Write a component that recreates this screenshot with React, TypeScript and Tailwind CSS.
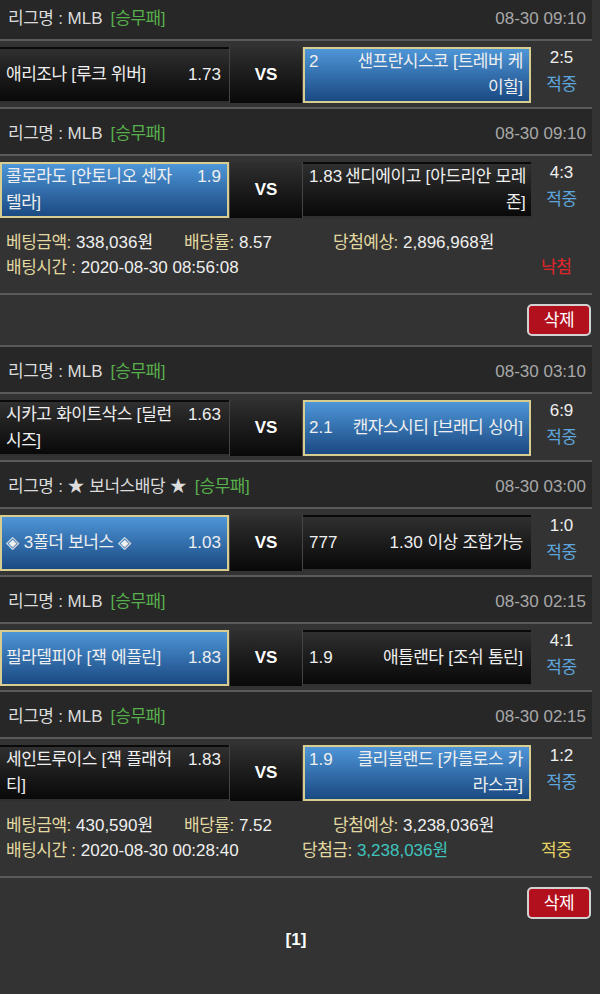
import React from 'react'

type Side = { lines: string[]; odds: string; picked?: boolean }
type Match = { league: string; time: string; home: Side; away: Side; score: string }
type Bet = {
  matches: Match[]
  amount: string
  rate: string
  expect: string
  time: string
  win?: string
  result: 'win' | 'lose'
}

const HANGUL = /([\uAC00-\uD7A3]+)/

// 한글만 폭 보정 (원본 폰트 폭에 맞춤)
const Ko = ({ text }: { text: string }) => (
  <>
    {text.split(HANGUL).map((part, i) =>
      i % 2 === 1 ? (
        <span key={i} className="text-[17px] tracking-[-0.5px]">
          {part}
        </span>
      ) : (
        <React.Fragment key={i}>{part}</React.Fragment>
      )
    )}
  </>
)

const bets: Bet[] = [
  {
    matches: [
      {
        league: 'MLB',
        time: '08-30 09:10',
        home: { lines: ['애리조나 [루크 위버]'], odds: '1.73' },
        away: { lines: ['샌프란시스코 [트레버 케', '이힐]'], odds: '2', picked: true },
        score: '2:5'
      },
      {
        league: 'MLB',
        time: '08-30 09:10',
        home: { lines: ['콜로라도 [안토니오 센자', '텔라]'], odds: '1.9', picked: true },
        away: { lines: ['샌디에이고 [아드리안 모레', '존]'], odds: '1.83' },
        score: '4:3'
      }
    ],
    amount: '338,036원',
    rate: '8.57',
    expect: '2,896,968원',
    time: '2020-08-30 08:56:08',
    result: 'lose'
  },
  {
    matches: [
      {
        league: 'MLB',
        time: '08-30 03:10',
        home: { lines: ['시카고 화이트삭스 [딜런', '시즈]'], odds: '1.63' },
        away: { lines: ['캔자스시티 [브래디 싱어]'], odds: '2.1', picked: true },
        score: '6:9'
      },
      {
        league: '★ 보너스배당 ★',
        time: '08-30 03:00',
        home: { lines: ['◈ 3폴더 보너스 ◈'], odds: '1.03', picked: true },
        away: { lines: ['1.30 이상 조합가능'], odds: '777' },
        score: '1:0'
      },
      {
        league: 'MLB',
        time: '08-30 02:15',
        home: { lines: ['필라델피아 [잭 에플린]'], odds: '1.83', picked: true },
        away: { lines: ['애틀랜타 [조쉬 톰린]'], odds: '1.9' },
        score: '4:1'
      },
      {
        league: 'MLB',
        time: '08-30 02:15',
        home: { lines: ['세인트루이스 [잭 플래허', '티]'], odds: '1.83' },
        away: { lines: ['클리블랜드 [카를로스 카', '라스코]'], odds: '1.9', picked: true },
        score: '1:2'
      }
    ],
    amount: '430,590원',
    rate: '7.52',
    expect: '3,238,036원',
    time: '2020-08-30 00:28:40',
    win: '3,238,036원',
    result: 'win'
  }
]

const cellClass = (picked?: boolean) =>
  picked
    ? 'border-[#d8cd90] bg-gradient-to-b from-[#4e96d8] to-[#1b4a83]'
    : 'border-transparent bg-gradient-to-b from-[#303030] to-[#090909]'

const LeagueHeader = ({ league, time }: { league: string; time: string }) => (
  <div className="h-[49px] border-y-2 border-[#5a5a5a] bg-[#272727] flex items-center justify-between pt-[4px] pl-[8px] pr-[6px]">
    <div className="text-[#dcdcdc] whitespace-nowrap">
      <Ko text={`리그명 : ${league}`} />
      <span className="ml-[8px] text-[#58b04c]">
        <Ko text="[승무패]" />
      </span>
    </div>
    <div className="text-[#a8a8a8]">{time}</div>
  </div>
)

const MatchRow = ({ match }: { match: Match }) => (
  <div className="flex h-[66px] bg-[#333]">
    <div className="flex w-[531px] pt-[6px] pb-[4px]">
      <div className={`w-[229px] flex items-center border-2 pl-[4px] pr-[6px] ${cellClass(match.home.picked)}`}>
        <div className="flex items-start w-full leading-[26px] text-[#efefef]">
          <div className="flex-1">
            {match.home.lines.map((l) => (
              <div key={l} className="whitespace-nowrap">
                <Ko text={l} />
              </div>
            ))}
          </div>
          <div className="shrink-0">{match.home.odds}</div>
        </div>
      </div>
      <div className="w-[74px] flex items-center justify-center border-x border-[#444] bg-gradient-to-b from-[#303030] to-[#090909] font-bold text-white">
        VS
      </div>
      <div className={`w-[228px] flex items-center border-2 pl-[4px] pr-[6px] ${cellClass(match.away.picked)}`}>
        <div className="flex items-start gap-[3px] w-full leading-[26px] text-[#efefef]">
          <div className="shrink-0">{match.away.odds}</div>
          <div className="flex-1 text-right">
            {match.away.lines.map((l) => (
              <div key={l} className="whitespace-nowrap">
                <Ko text={l} />
              </div>
            ))}
          </div>
        </div>
      </div>
    </div>
    <div className="flex-1 flex flex-col items-center pt-[3px] leading-[27px]">
      <div className="text-[#efefef]">{match.score}</div>
      <div className="text-[#5ea6de]">
        <Ko text="적중" />
      </div>
    </div>
  </div>
)

const Label = ({ text }: { text: string }) => (
  <span className="text-[#e2d8a0]">
    <Ko text={text} />
  </span>
)

const BetInfo = ({ bet }: { bet: Bet }) => (
  <div className="bg-[#333] pt-[8px] pb-[13px] pl-[6px] border-b-2 border-[#5a5a5a] leading-[25px] text-[#efefef]">
    <div className="flex">
      <div className="w-[178px] whitespace-nowrap">
        <Label text="베팅금액:" /> <Ko text={bet.amount} />
      </div>
      <div className="w-[149px] whitespace-nowrap">
        <Label text="배당률:" /> {bet.rate}
      </div>
      <div className="whitespace-nowrap">
        <Label text="당첨예상:" /> <Ko text={bet.expect} />
      </div>
    </div>
    <div className="flex">
      <div className="w-[296px] whitespace-nowrap">
        <Label text="배팅시간 :" /> {bet.time}
      </div>
      <div className="w-[239px] whitespace-nowrap">
        {bet.win && (
          <>
            <Label text="당첨금:" />{' '}
            <span className="text-[#3fc4bd]">
              <Ko text={bet.win} />
            </span>
          </>
        )}
      </div>
      <div className={bet.result === 'win' ? 'text-[#e6d564]' : 'text-[#e2252b]'}>
        <Ko text={bet.result === 'win' ? '적중' : '낙첨'} />
      </div>
    </div>
  </div>
)

const DeleteBar = () => (
  <div className="h-[50px] flex items-center justify-end pr-[1px]">
    <button className="w-[64px] h-[32px] rounded-[5px] border-2 border-[#d2d2d2] bg-[#b3101e] text-white leading-none">
      <Ko text="삭제" />
    </button>
  </div>
)

export default function App() {
  return (
    <div className="min-h-[994px] bg-[#333] overflow-hidden text-[17px] font-['Liberation_Sans','Noto_Sans_CJK_KR',sans-serif]">
      <div className="w-[592px] -mt-[8px]">
        {bets.map((bet, bi) => (
          <div key={bi}>
            {bet.matches.map((m, mi) => (
              <div key={mi}>
                <LeagueHeader league={m.league} time={m.time} />
                <MatchRow match={m} />
              </div>
            ))}
            <BetInfo bet={bet} />
            <DeleteBar />
          </div>
        ))}
        <div className="text-center font-bold text-white leading-[24px]">[1]</div>
      </div>
    </div>
  )
}
